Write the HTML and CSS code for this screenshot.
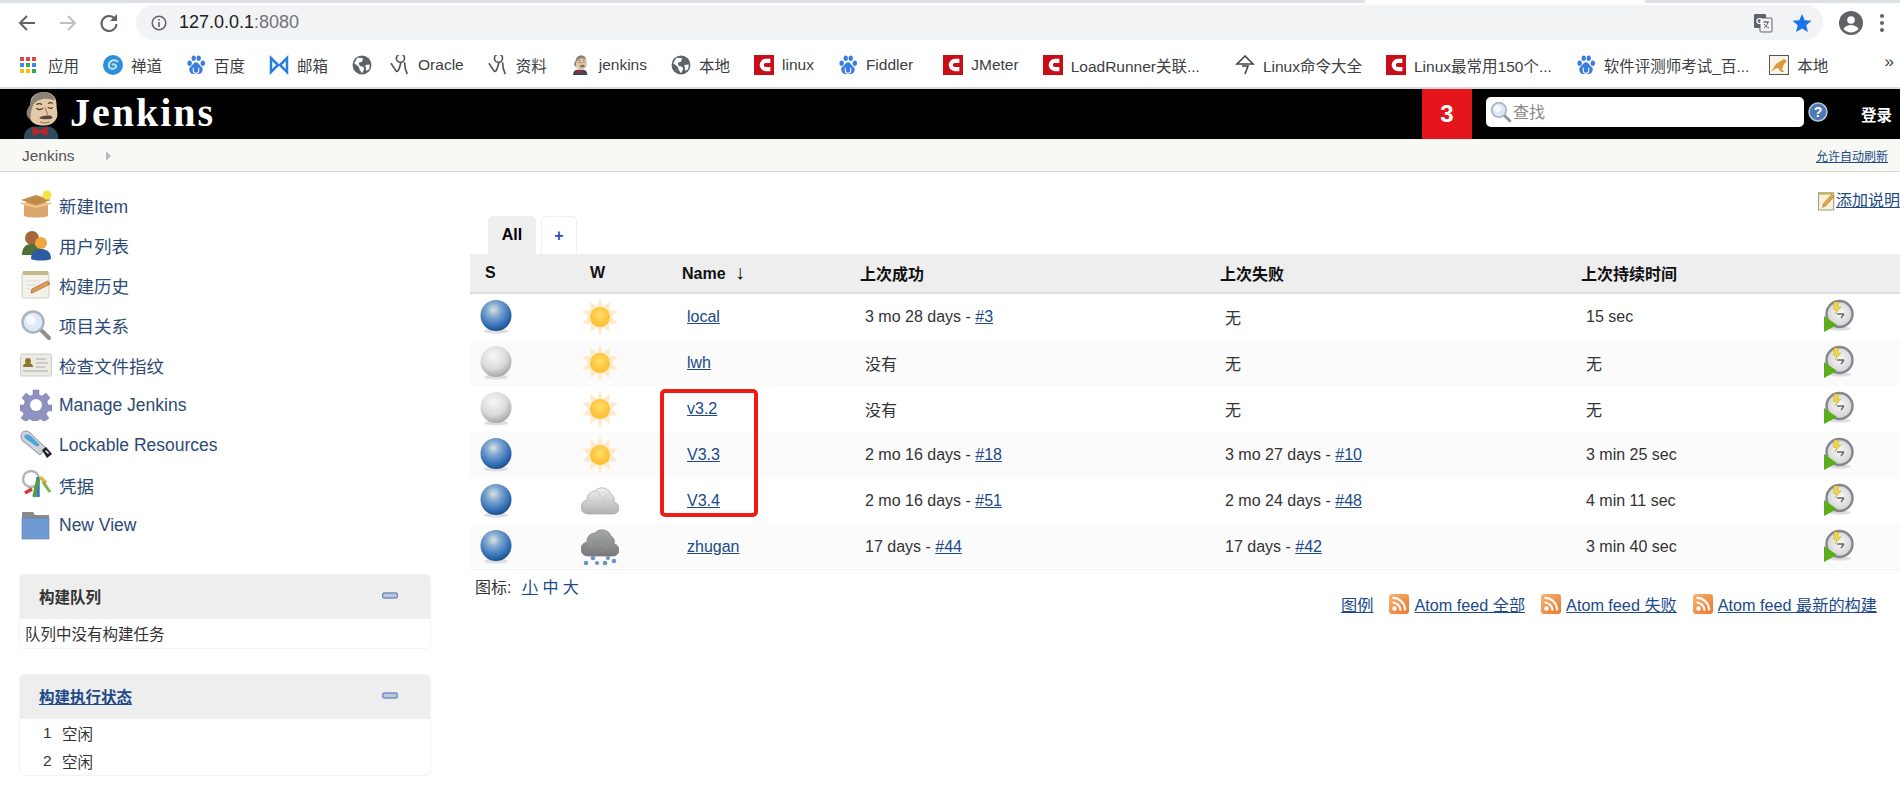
FILE: index.html
```html
<!DOCTYPE html>
<html>
<head>
  <title>Jenkins</title>
  <link rel="stylesheet" href="styles.css">
</head>
<body>
  <svg class="sprite" aria-hidden="true">
    <defs>
      <radialGradient id="blue-ball" cx="42%" cy="32%" r="68%">
        <stop offset="0" stop-color="#d9e4df"/>
        <stop offset="0.35" stop-color="#7fa6d0"/>
        <stop offset="0.8" stop-color="#2f6db5"/>
        <stop offset="1" stop-color="#234f8c"/>
      </radialGradient>
      <radialGradient id="grey-ball" cx="42%" cy="32%" r="68%">
        <stop offset="0" stop-color="#f7f7f7"/>
        <stop offset="0.6" stop-color="#dcdcdc"/>
        <stop offset="1" stop-color="#a9a9a9"/>
      </radialGradient>
      <radialGradient id="sun-core" cx="50%" cy="40%" r="60%">
        <stop offset="0" stop-color="#ffe06a"/>
        <stop offset="1" stop-color="#fcb92c"/>
      </radialGradient>
      <linearGradient id="cloud-light" x1="0" y1="0" x2="0" y2="1">
        <stop offset="0" stop-color="#f0f0f0"/>
        <stop offset="1" stop-color="#b0b0b0"/>
      </linearGradient>
      <linearGradient id="cloud-dark" x1="0" y1="0" x2="0" y2="1">
        <stop offset="0" stop-color="#a8a8a8"/>
        <stop offset="1" stop-color="#77797a"/>
      </linearGradient>
      <radialGradient id="clock-face" cx="50%" cy="45%" r="55%">
        <stop offset="0" stop-color="#fafafa"/>
        <stop offset="1" stop-color="#d0d0d0"/>
      </radialGradient>
      <linearGradient id="rss-bg" x1="0" y1="0" x2="1" y2="1">
        <stop offset="0" stop-color="#f9b475"/>
        <stop offset="1" stop-color="#e9772b"/>
      </linearGradient>

      <symbol id="ball-blue" viewBox="0 0 32 34">
        <ellipse cx="16" cy="31" rx="12" ry="2.5" fill="#ddd"/>
        <circle cx="16" cy="15.5" r="15.5" fill="url(#blue-ball)"/>
      </symbol>
      <symbol id="ball-grey" viewBox="0 0 32 34">
        <ellipse cx="16" cy="31" rx="12" ry="2.5" fill="#ddd"/>
        <circle cx="16" cy="15.5" r="15.5" fill="url(#grey-ball)"/>
      </symbol>
      <symbol id="sun" viewBox="0 0 36 38">
        <polygon fill="#fdeac6" points="18,0 21,9 28,4 27,12 36,13 29,19 36,25 27,26 28,34 21,29 18,38 15,29 8,34 9,26 0,25 7,19 0,13 9,12 8,4 15,9"/>
        <circle cx="18" cy="19" r="10" fill="url(#sun-core)"/>
      </symbol>
      <symbol id="cloud" viewBox="0 0 38 38">
        <path fill="url(#cloud-light)" stroke="#a8a8a8" stroke-width="0.7" d="M8 32a7 7 0 0 1-2-14 8 8 0 0 1 8-9 9.500 9.500 0 0 1 16 3 7 7 0 0 1 3 8 6 6 0 0 1-2 12z"/>
        <path fill="none" stroke="#cdcdcd" stroke-width="1.200" d="M14 9c3 0 5 2 5 6M30 12c-4 0-7 2-7 6M6 18c3 0 5 2 5 5M17 22c4-2 8-1 9 3"/>
      </symbol>
      <symbol id="storm" viewBox="0 0 38 38">
        <path fill="url(#cloud-dark)" stroke="#777" stroke-width="0.7" d="M8 28a7 7 0 0 1-2-14 8 8 0 0 1 8-9 9.500 9.500 0 0 1 16 3 7 7 0 0 1 3 8 6 6 0 0 1-2 12z"/>
        <path fill="none" stroke="#9a9a9a" stroke-width="1.200" d="M14 5c3 0 5 2 5 6M30 8c-4 0-7 2-7 6M6 14c3 0 5 2 5 5M17 18c4-2 8-1 9 3"/>
        <g fill="#6f92c6">
          <circle cx="5" cy="35" r="2.300"/><circle cx="12" cy="30" r="2.300"/><circle cx="16" cy="35" r="2"/>
          <circle cx="24" cy="35" r="2.300"/><circle cx="27" cy="30" r="2.100"/><circle cx="33" cy="33" r="2.300"/>
        </g>
      </symbol>
      <symbol id="build-now" viewBox="0 0 32 36">
        <ellipse cx="18" cy="29.500" rx="11" ry="2" fill="#ddd"/>
        <circle cx="17.500" cy="15" r="13" fill="url(#clock-face)" stroke="#85858f" stroke-width="2.400"/>
        <polygon fill="#f1d54a" stroke="#b59a1d" stroke-width="0.400" points="12,3 17,3 15.500,8 19,8 13,15 14.500,10.500 11.500,10.500"/>
        <path fill="none" stroke="#666" stroke-width="1.300" d="M15 15l7 0M22 15l-3 4"/>
        <polygon fill="#5cad1d" points="2,17 15,26 2,33"/>
      </symbol>
      <symbol id="rss" viewBox="0 0 20 20">
        <rect width="20" height="20" rx="3" fill="url(#rss-bg)"/>
        <circle cx="5.5" cy="14.5" r="2.2" fill="#fff"/>
        <path fill="none" stroke="#fff" stroke-width="2.2" d="M3.5 8.5a8 8 0 0 1 8 8M3.5 3.8a12.7 12.7 0 0 1 12.7 12.7"/>
      </symbol>
      <symbol id="minus" viewBox="0 0 16 8">
        <rect x="0.7" y="1" width="14.6" height="5" rx="1.5" fill="#bcc8d8" stroke="#6f8fc2" stroke-width="1.4"/>
      </symbol>
      <symbol id="globe" viewBox="0 0 18 18">
        <circle cx="9" cy="9" r="8.5" fill="#5f6368"/>
        <path fill="#fff" d="M5 2.5l5 .5-1 3-3 1 1 3 3 .5 1 2-2 4-2-3-1-3-4-3zM12 9l4-.5-.5 4-2.5 2z"/>
      </symbol>
      <symbol id="csdn" viewBox="0 0 22 22">
        <rect width="22" height="22" fill="#c80e16"/>
        <path fill="none" stroke="#fff" stroke-width="4.500" d="M18 6.500h-5a4.500 4.500 0 0 0 0 9h5"/>
      </symbol>
      <symbol id="baidu" viewBox="0 0 20 22">
        <g fill="#3a7de0">
          <ellipse cx="3" cy="9" rx="2.4" ry="3"/><ellipse cx="7.500" cy="3.500" rx="2.300" ry="3"/>
          <ellipse cx="13" cy="3.500" rx="2.300" ry="3"/><ellipse cx="17.500" cy="9" rx="2.400" ry="3"/>
          <path d="M10 8c3 0 4 4 6 5 3 2 1 8-3 8-1 0-2-.5-3-.5s-2 .5-3 .5c-4 0-6-6-3-8 2-1 3-5 6-5z"/>
        </g>
        <path fill="none" stroke="#fff" stroke-width="1.200" d="M7 14v3a1.500 1.500 0 0 0 6 0v-3"/>
      </symbol>
      <symbol id="oracle" viewBox="0 0 22 22">
        <path fill="none" stroke="#555" stroke-width="1.800" d="M1 9l6 9c2 1 4-5 5-10M12 8a4.500 4.500 0 1 1 4-5c0 3-2 5-4 5zM16 8c0 5 1 9 3 13"/>
      </symbol>
      <symbol id="butler" viewBox="0 0 42 50">
        <path fill="#2f4a5f" d="M1 50c0-8 4-12 11-13l16 0c6 2 9 7 9 13z"/>
        <path fill="#e4c9a8" d="M8 12c0-7 7-11 14-11s13 4 13 12c0 5 1 8 1 11 0 7-6 12-14 12S8 33 7 27c-1-5 1-10 1-15z"/>
        <path fill="#b5262a" d="M10 37l8 3.500 8-3.500v10l-8-3.500-8 3.500z"/>
        <path fill="#8a8276" d="M8 13c-2 5-6 8-3 14l3 3c0-7 1-12 3-16 4-5 12-8 22-4 1-5-6-9-12-9S9 6 8 13z"/>
        <path fill="none" stroke="#4a3a2e" stroke-width="1.300" d="M14 18c2 1.500 5 1.500 7 0M26 17c2 1.200 4 1.200 5 0M14 14c2-1 4-1 6 0M26 13c2-1 4-1 5 0"/>
        <path fill="#57463a" d="M17 28c3-2 8-3 13-2l1 2c-4 2-10 2-14 0z"/>
        <path fill="none" stroke="#a57c5e" stroke-width="1.200" d="M23 17c1 3 2 5 3 8M18 32c3 1.500 7 1.500 10 0"/>
      </symbol>
      <symbol id="icon-new" viewBox="0 0 32 32">
        <path fill="#dba66b" d="M4 14l12-4 12 4v13c-4 2-20 2-24 0z"/>
        <path fill="#c28a4a" d="M1 11l15-5 15 5-15 5z"/>
        <path fill="#edc795" d="M1 13l15 4 15-4v2l-15 4-15-4z"/>
        <circle cx="27" cy="6" r="4.500" fill="#f4e642"/>
      </symbol>
      <symbol id="icon-people" viewBox="0 0 32 32">
        <circle cx="12" cy="9" r="7" fill="#a5683a"/>
        <path fill="#4d7034" d="M2 26c0-8 4-11 10-11s10 3 10 11z"/>
        <circle cx="21" cy="14" r="6" fill="#f0a73e"/>
        <path fill="#2c5ba2" d="M11 30c0-7 4-10 10-10s10 3 10 10c-5 2-15 2-20 0z"/>
      </symbol>
      <symbol id="icon-history" viewBox="0 0 32 32">
        <rect x="2" y="3" width="27" height="26" rx="2" fill="#f2f1ea" stroke="#cfcfc6"/>
        <rect x="3" y="2" width="25" height="4" fill="#c5b88c"/>
        <path stroke="#ddd" d="M6 12h14M6 16h10M6 20h12"/>
        <path fill="#e0a14f" stroke="#b04f2a" stroke-width="0.700" d="M11 24l1-4 16-8 2 3-16 8z"/>
      </symbol>
      <symbol id="icon-search" viewBox="0 0 32 32">
        <path stroke="#8f8f8f" stroke-width="4" stroke-linecap="round" d="M20 20l9 9"/>
        <circle cx="13" cy="13" r="10.500" fill="#dfe9f6" stroke="#a9b4c4" stroke-width="2.500"/>
        <circle cx="11" cy="11" r="5" fill="#f6f9fd"/>
      </symbol>
      <symbol id="icon-finger" viewBox="0 0 32 24">
        <rect x="0.500" y="1" width="31" height="22" rx="2" fill="#ecebe3" stroke="#ccc"/>
        <circle cx="8" cy="8" r="3" fill="#8a7a2e"/>
        <path fill="#8a7a2e" d="M3 14c0-3 2-4 5-4s5 1 5 4z"/>
        <path stroke="#aaa" d="M16 6h10M16 10h12M16 14h9M3 18h25"/>
      </symbol>
      <symbol id="icon-gear" viewBox="0 0 32 32">
        <path fill="#8f92c0" stroke="#7a7da8" stroke-width="0.500" d="M13 1h6v5l3 1 4-3 4 5-3 3 1 4h4v6h-4l-2 3 3 4-5 4-3-3-3 1v4h-6v-4l-3-1-3 3-5-4 3-4-2-3H0v-6h4l1-4-3-3 4-5 4 3 3-1z"/>
        <circle cx="16" cy="16" r="6" fill="#fff"/>
      </symbol>
      <symbol id="icon-usb" viewBox="0 0 32 32">
        <path fill="#cfd3d8" stroke="#8c9096" d="M1 6c1-4 5-5 8-3l17 16-6 7L3 12c-2-2-2-4-2-6z"/>
        <path fill="#4ea5dd" d="M5 6c2-1 4 0 6 1l8 8c1 2-1 3-3 2L6 10c-2-1-2-3-1-4z"/>
        <path fill="#222" d="M22 21l4-3 6 7-5 4z"/>
        <path fill="#eee" d="M26 21l3 3-1 1-3-3z"/>
      </symbol>
      <symbol id="icon-keys" viewBox="0 0 32 32">
        <circle cx="11" cy="10" r="8" fill="#fff" stroke="#b6b6b6" stroke-width="2.500"/>
        <path stroke="#d33a30" stroke-width="3.500" d="M12 20l-7 4"/>
        <path stroke="#3a77c9" stroke-width="3.500" d="M18 8l0 20"/>
        <path stroke="#4da33a" stroke-width="3.500" d="M14 28l4-18"/>
        <path stroke="#e0b13a" stroke-width="3.500" d="M20 8l6 6"/>
        <path stroke="#7fae4a" stroke-width="3" d="M23 13l7 10"/>
      </symbol>
      <symbol id="icon-folder" viewBox="0 0 32 32">
        <path fill="#8a8a8a" d="M2 3h11l2 3h14v6H2z"/>
        <path fill="#6f9ad2" stroke="#5a7ea8" stroke-width="0.600" d="M2 9h27v21H2z"/>
      </symbol>
      <symbol id="icon-note" viewBox="0 0 20 22">
        <rect x="0.500" y="2" width="17" height="19" fill="#f5f0da" stroke="#9c9170"/>
        <rect x="0.500" y="1" width="17" height="3" fill="#c9b46b"/>
        <path fill="#e8a53c" stroke="#8a5b1c" stroke-width="0.500" d="M5 18l1-4 9-10 3 2-9 10z"/>
      </symbol>
    </defs>
  </svg>

  <div class="tabstrip">
    <div class="tabstrip-left"></div>
    <div class="tabstrip-active"></div>
    <div class="tabstrip-right"></div>
  </div>

  <div class="toolbar">
    <svg class="nav-icon" viewBox="0 0 20 20"><path fill="none" stroke="#5f6368" stroke-width="2" d="M18 10H3M10 3l-7 7 7 7"/></svg>
    <svg class="nav-icon nav-gap" viewBox="0 0 20 20"><path fill="none" stroke="#bdc1c6" stroke-width="2" d="M2 10h15M10 3l7 7-7 7"/></svg>
    <svg class="nav-icon nav-gap" viewBox="0 0 20 20"><path fill="none" stroke="#5f6368" stroke-width="2" d="M16 6a7.500 7.500 0 1 0 1.500 5"/><path fill="#5f6368" d="M18 1v7h-7z"/></svg>
    <div class="omnibox">
      <svg class="info-icon" viewBox="0 0 16 16"><circle cx="8" cy="8" r="6.800" fill="none" stroke="#5f6368" stroke-width="1.500"/><path fill="#5f6368" d="M7.200 7h1.600v5H7.200zM7.200 4h1.600v1.600H7.200z"/></svg>
      <span class="url">127.0.0.1<span class="url-port">:8080</span></span>
      <svg class="translate-icon" viewBox="0 0 20 20"><rect x="1" y="1" width="12" height="14" rx="1" fill="#5f6368"/><rect x="7" y="5" width="12" height="14" rx="1" fill="#f1f3f4" stroke="#5f6368"/><text x="3" y="11" class="translate-g">G</text><path fill="none" stroke="#5f6368" d="M10 9h6M13 8v2M15 9c-1 3-2 5-4 6M11 11c1 2 3 3 5 4"/></svg>
      <svg class="star-icon" viewBox="0 0 20 20"><polygon fill="#1a73e8" points="10,1 12.700,7.200 19.500,7.800 14.300,12.300 15.900,19 10,15.500 4.100,19 5.700,12.300 0.500,7.800 7.300,7.200"/></svg>
    </div>
    <svg class="account-icon" viewBox="0 0 24 24"><circle cx="12" cy="12" r="12" fill="#5f6368"/><circle cx="12" cy="9" r="3.800" fill="#fff"/><path fill="#fff" d="M4.500 18c1.500-3 5-4 7.500-4s6 1 7.500 4c-4 4.500-11 4.500-15 0z"/></svg>
    <div class="dots"><i></i><i></i><i></i></div>
  </div>

  <div class="bookmarks">
    <a class="bm"><svg class="bm-icon" viewBox="0 -2 20 20"><g fill="#e8453c"><rect width="4" height="4"/><rect x="6" width="4" height="4"/><rect x="12" width="4" height="4"/></g><g fill="#4285f4"><rect y="6" width="4" height="4"/><rect x="6" y="6" width="4" height="4" fill="#34a853"/><rect x="12" y="6" width="4" height="4"/></g><g fill="#fbbc05"><rect y="12" width="4" height="4"/><rect x="6" y="12" width="4" height="4"/><rect x="12" y="12" width="4" height="4" fill="#34a853"/></g></svg>应用</a>
    <a class="bm"><svg class="bm-icon" viewBox="0 0 20 20"><circle cx="10" cy="10" r="10" fill="#2f8fd8"/><path fill="none" stroke="#bfe3f7" stroke-width="2" d="M15 7c-3-3-8-2-9 2s3 6 6 4-1-5-3-3"/></svg>禅道</a>
    <a class="bm"><svg class="bm-icon"><use href="#baidu"/></svg>百度</a>
    <a class="bm"><svg class="bm-icon" viewBox="0 0 20 20"><path fill="none" stroke="#2a7de1" stroke-width="2.500" d="M2 3v14l7-7zM18 3v14l-7-7z"/></svg>邮箱</a>
    <a class="bm bm-globe"><svg class="bm-icon"><use href="#globe"/></svg></a>
    <a class="bm"><svg class="bm-icon"><use href="#oracle"/></svg>Oracle</a>
    <a class="bm"><svg class="bm-icon"><use href="#oracle"/></svg>资料</a>
    <a class="bm"><svg class="bm-icon"><use href="#butler"/></svg>jenkins</a>
    <a class="bm"><svg class="bm-icon"><use href="#globe"/></svg>本地</a>
    <a class="bm"><svg class="bm-icon"><use href="#csdn"/></svg>linux</a>
    <a class="bm"><svg class="bm-icon"><use href="#baidu"/></svg>Fiddler</a>
    <a class="bm bm-push-s"><svg class="bm-icon"><use href="#csdn"/></svg>JMeter</a>
    <a class="bm"><svg class="bm-icon"><use href="#csdn"/></svg>LoadRunner关联...</a>
    <a class="bm bm-push-m"><svg class="bm-icon" viewBox="0 0 20 20"><path fill="none" stroke="#444" stroke-width="1.600" d="M10 1L2 9h16zM7 11h6l-3 8"/></svg>Linux命令大全</a>
    <a class="bm"><svg class="bm-icon"><use href="#csdn"/></svg>Linux最常用150个...</a>
    <a class="bm"><svg class="bm-icon"><use href="#baidu"/></svg>软件评测师考试_百...</a>
    <a class="bm bm-pull"><svg class="bm-icon" viewBox="0 0 20 20"><rect x="0.500" y="0.500" width="19" height="19" fill="#f8f4e8" stroke="#555"/><path fill="#d89a3a" d="M2 17l5-8 8-5 3 2-3 3-2 5 2 3h-3l-3-4-3 1z"/></svg>本地</a>
    <span class="bm-more">»</span>
  </div>

  <div class="header">
    <svg class="logo"><use href="#butler"/></svg>
    <span class="logo-text">Jenkins</span>
    <div class="header-right">
      <div class="alert-count">3</div>
      <div class="search-box">
        <svg class="search-icon"><use href="#icon-search"/></svg>
        <span class="search-hint">查找</span>
      </div>
      <svg class="help-icon" viewBox="0 0 20 20"><circle cx="10" cy="10" r="9" fill="#4e79b5" stroke="#b3c4dc" stroke-width="1.500"/><text x="10" y="15" class="help-mark">?</text></svg>
      <span class="login">登录</span>
    </div>
  </div>

  <div class="breadcrumb">
    <span class="crumb">Jenkins</span>
    <span class="crumb-arrow"></span>
    <a class="auto-refresh">允许自动刷新</a>
  </div>

  <div class="main">
    <div class="sidebar">
      <div class="tasks">
        <a class="task"><svg class="task-icon"><use href="#icon-new"/></svg>新建Item</a>
        <a class="task"><svg class="task-icon"><use href="#icon-people"/></svg>用户列表</a>
        <a class="task"><svg class="task-icon"><use href="#icon-history"/></svg>构建历史</a>
        <a class="task"><svg class="task-icon"><use href="#icon-search"/></svg>项目关系</a>
        <a class="task"><svg class="task-icon"><use href="#icon-finger"/></svg>检查文件指纹</a>
        <a class="task"><svg class="task-icon"><use href="#icon-gear"/></svg>Manage Jenkins</a>
        <a class="task"><svg class="task-icon"><use href="#icon-usb"/></svg>Lockable Resources</a>
        <a class="task"><svg class="task-icon"><use href="#icon-keys"/></svg>凭据</a>
        <a class="task"><svg class="task-icon"><use href="#icon-folder"/></svg>New View</a>
      </div>

      <div class="pane">
        <div class="pane-header">
          <span>构建队列</span>
          <svg class="pane-minus"><use href="#minus"/></svg>
        </div>
        <div class="pane-text">队列中没有构建任务</div>
      </div>

      <div class="pane">
        <div class="pane-header">
          <a class="pane-link">构建执行状态</a>
          <svg class="pane-minus"><use href="#minus"/></svg>
        </div>
        <div class="executors">
          <div class="executor"><span class="executor-num">1</span>空闲</div>
          <div class="executor"><span class="executor-num">2</span>空闲</div>
        </div>
      </div>
    </div>

    <div class="content">
      <div class="description">
        <svg class="note-icon"><use href="#icon-note"/></svg><a class="link">添加说明</a>
      </div>

      <div class="tabs">
        <div class="tab tab-active">All</div>
        <div class="tab tab-add">+</div>
      </div>

      <div class="projects">
        <table class="job-table">
          <colgroup>
            <col class="col-s"><col class="col-w"><col class="col-name"><col class="col-success"><col class="col-fail"><col class="col-dur"><col>
          </colgroup>
          <thead>
            <tr>
              <th class="th-wide">S</th>
              <th class="th-wide">W</th>
              <th>Name <span class="sort-arrow">↓</span></th>
              <th>上次成功</th>
              <th>上次失败</th>
              <th>上次持续时间</th>
              <th></th>
            </tr>
          </thead>
          <tbody>
            <tr>
              <td class="td-s"><svg class="ball"><use href="#ball-blue"/></svg></td>
              <td class="td-w"><svg class="weather"><use href="#sun"/></svg></td>
              <td><a class="link">local</a></td>
              <td>3 mo 28 days - <a class="link">#3</a></td>
              <td>无</td>
              <td>15 sec</td>
              <td class="td-build"><svg class="build"><use href="#build-now"/></svg></td>
            </tr>
            <tr>
              <td class="td-s"><svg class="ball"><use href="#ball-grey"/></svg></td>
              <td class="td-w"><svg class="weather"><use href="#sun"/></svg></td>
              <td><a class="link">lwh</a></td>
              <td>没有</td>
              <td>无</td>
              <td>无</td>
              <td class="td-build"><svg class="build"><use href="#build-now"/></svg></td>
            </tr>
            <tr>
              <td class="td-s"><svg class="ball"><use href="#ball-grey"/></svg></td>
              <td class="td-w"><svg class="weather"><use href="#sun"/></svg></td>
              <td><a class="link">v3.2</a></td>
              <td>没有</td>
              <td>无</td>
              <td>无</td>
              <td class="td-build"><svg class="build"><use href="#build-now"/></svg></td>
            </tr>
            <tr>
              <td class="td-s"><svg class="ball"><use href="#ball-blue"/></svg></td>
              <td class="td-w"><svg class="weather"><use href="#sun"/></svg></td>
              <td><a class="link">V3.3</a></td>
              <td>2 mo 16 days - <a class="link">#18</a></td>
              <td>3 mo 27 days - <a class="link">#10</a></td>
              <td>3 min 25 sec</td>
              <td class="td-build"><svg class="build"><use href="#build-now"/></svg></td>
            </tr>
            <tr>
              <td class="td-s"><svg class="ball"><use href="#ball-blue"/></svg></td>
              <td class="td-w"><svg class="weather"><use href="#cloud"/></svg></td>
              <td><a class="link">V3.4</a></td>
              <td>2 mo 16 days - <a class="link">#51</a></td>
              <td>2 mo 24 days - <a class="link">#48</a></td>
              <td>4 min 11 sec</td>
              <td class="td-build"><svg class="build"><use href="#build-now"/></svg></td>
            </tr>
            <tr>
              <td class="td-s"><svg class="ball"><use href="#ball-blue"/></svg></td>
              <td class="td-w"><svg class="weather"><use href="#storm"/></svg></td>
              <td><a class="link">zhugan</a></td>
              <td>17 days - <a class="link">#44</a></td>
              <td>17 days - <a class="link">#42</a></td>
              <td>3 min 40 sec</td>
              <td class="td-build"><svg class="build"><use href="#build-now"/></svg></td>
            </tr>
          </tbody>
        </table>
        <div class="red-box"></div>
      </div>

      <div class="table-footer">
        <div class="icon-sizes">图标: <a class="link size-first">小</a> <a class="size-link">中</a> <a class="size-link">大</a></div>
        <div class="feeds">
          <a class="link">图例</a>
          <span class="feed"><svg class="rss-icon"><use href="#rss"/></svg><a class="link">Atom feed 全部</a></span>
          <span class="feed"><svg class="rss-icon"><use href="#rss"/></svg><a class="link">Atom feed 失败</a></span>
          <span class="feed"><svg class="rss-icon"><use href="#rss"/></svg><a class="link">Atom feed 最新的构建</a></span>
        </div>
      </div>
    </div>
  </div>
</body>
</html>
```

FILE: styles.css
```css
body {
  margin: 0;
  height: 801px;
  overflow: hidden;
  background-color: #fff;
  color: #333;
  font-family: "Liberation Sans", "Noto Sans CJK SC", sans-serif;
  font-size: 16px;
}

.sprite {
  display: block;
  width: 0;
  height: 0;
}

.link {
  color: #204a87;
  text-decoration: underline;
}

/* browser chrome */
.tabstrip {
  display: flex;
  height: 3px;
}

.tabstrip-left {
  width: 1365px;
  background-color: #dee1e6;
}

.tabstrip-active {
  width: 280px;
  background-color: #fff;
}

.tabstrip-right {
  flex: 1;
  background-color: #dee1e6;
}

.toolbar {
  display: flex;
  align-items: center;
  height: 39px;
  padding-left: 17px;
  background-color: #fff;
}

.nav-icon {
  width: 20px;
  height: 20px;
}

.nav-gap {
  margin-left: 21px;
}

.omnibox {
  display: flex;
  align-items: center;
  width: 1687px;
  height: 35px;
  margin-left: 17px;
  padding-left: 15px;
  box-sizing: border-box;
  border-radius: 18px;
  background-color: #f1f3f4;
}

.info-icon {
  width: 16px;
  height: 16px;
}

.url {
  margin-left: 12px;
  font-size: 18px;
  color: #202124;
}

.url-port {
  color: #70757a;
}

.translate-icon {
  width: 20px;
  height: 20px;
  margin-left: auto;
}

.translate-g {
  font-size: 9px;
  font-weight: bold;
  fill: #fff;
}

.star-icon {
  width: 20px;
  height: 20px;
  margin-left: 19px;
  margin-right: 11px;
}

.account-icon {
  width: 24px;
  height: 24px;
  margin-left: 16px;
}

.dots {
  display: flex;
  flex-direction: column;
  gap: 3px;
  margin-left: 17px;
}

.dots i {
  width: 4px;
  height: 4px;
  border-radius: 50%;
  background-color: #5f6368;
}

.bookmarks {
  display: flex;
  align-items: center;
  position: relative;
  height: 45px;
  padding-left: 20px;
  gap: 24px;
  background-color: #fff;
  border-bottom: 2px solid #dadce0;
  font-size: 15.5px;
  color: #3c4043;
  white-space: nowrap;
}

.bm {
  display: flex;
  align-items: center;
}

.bm-icon {
  width: 20px;
  height: 20px;
  margin-right: 8px;
}

.bm-globe .bm-icon {
  margin-right: -6px;
}

.bm-push-s {
  margin-left: 6px;
}

.bm-push-m {
  margin-left: 11px;
}

.bm-pull {
  margin-left: -4px;
}

.bm-more {
  position: absolute;
  top: 10px;
  right: 6px;
  font-size: 17px;
}

/* jenkins header */
.header {
  display: flex;
  align-items: center;
  height: 50px;
  background-color: #000;
}

.logo {
  width: 42px;
  height: 48px;
  margin-left: 22px;
  align-self: flex-end;
}

.logo-text {
  margin-left: 6px;
  margin-bottom: 4px;
  font-family: "Liberation Serif", serif;
  font-size: 40px;
  font-weight: bold;
  letter-spacing: 2px;
  color: #fff;
}

.header-right {
  display: flex;
  align-items: center;
  height: 100%;
  margin-left: auto;
}

.alert-count {
  display: flex;
  align-items: center;
  justify-content: center;
  width: 50px;
  height: 100%;
  background-color: #e5161b;
  color: #fff;
  font-size: 24px;
  font-weight: bold;
}

.search-box {
  display: flex;
  align-items: center;
  width: 318px;
  height: 30px;
  margin-left: 14px;
  margin-bottom: 5px;
  padding-left: 4px;
  box-sizing: border-box;
  border-radius: 5px;
  background-color: #fff;
}

.search-icon {
  width: 22px;
  height: 22px;
}

.search-hint {
  margin-left: 1px;
  margin-bottom: 2px;
  font-size: 16px;
  color: #888;
}

.help-icon {
  width: 20px;
  height: 20px;
  margin-left: 4px;
  margin-bottom: 5px;
}

.help-mark {
  font-size: 14px;
  font-weight: bold;
  fill: #fff;
  text-anchor: middle;
}

.login {
  width: 39px;
  margin-left: 33px;
  font-size: 15.5px;
  font-weight: bold;
  color: #fff;
}

.breadcrumb {
  display: flex;
  align-items: center;
  height: 31px;
  padding-left: 22px;
  padding-right: 12px;
  background-color: #f8f8f5;
  border-top: 1px solid #f1f1ec;
  border-bottom: 1px solid #d8d8d2;
}

.crumb {
  font-size: 15.5px;
  color: #555;
}

.crumb-arrow {
  width: 0;
  height: 0;
  margin-left: 31px;
  border-left: 5px solid #bbb;
  border-top: 5px solid transparent;
  border-bottom: 5px solid transparent;
}

.auto-refresh {
  margin-left: auto;
  font-size: 12px;
  color: #204a87;
  text-decoration: underline;
}

/* main area */
.main {
  display: flex;
}

.sidebar {
  flex: none;
  width: 412px;
  padding: 13px 39px 0 19px;
}

.tasks {
  display: flex;
  flex-direction: column;
  padding-left: 1px;
}

.task {
  display: flex;
  align-items: center;
  height: 40px;
  font-size: 17.5px;
  color: #2d4a75;
}

.task-icon {
  width: 32px;
  height: 32px;
  margin-right: 7px;
}

.pane {
  margin-bottom: 25px;
  border: 1px solid #f3f3f3;
  border-radius: 5px;
  overflow: hidden;
  background-color: #fff;
}

.tasks + .pane {
  margin-top: 29px;
}

.pane-header {
  display: flex;
  align-items: center;
  justify-content: space-between;
  height: 42px;
  padding: 0 32px 2px 19px;
  background-color: #eee;
  font-size: 15.5px;
  font-weight: bold;
}

.pane-link {
  color: #204a87;
  text-decoration: underline;
}

.pane-minus {
  width: 16px;
  height: 8px;
}

.pane-text {
  padding: 3px 4px 4px 5px;
  font-size: 15.5px;
}

.executor {
  display: flex;
  align-items: center;
  height: 28px;
  font-size: 15.5px;
}

.executor-num {
  width: 19px;
  margin-left: 23px;
}

.content {
  flex: 1;
  min-width: 0;
  overflow: hidden;
}

.description {
  display: flex;
  justify-content: flex-end;
  align-items: flex-end;
  height: 39px;
  padding-bottom: 5px;
  font-size: 16px;
  white-space: nowrap;
}

.note-icon {
  width: 18px;
  height: 20px;
}

.tabs {
  display: flex;
  gap: 5px;
  height: 38px;
  padding-left: 18px;
}

.tab {
  display: flex;
  align-items: center;
  justify-content: center;
  border-radius: 5px 5px 0 0;
  box-sizing: border-box;
  font-weight: bold;
}

.tab-active {
  width: 48px;
  background-color: #eee;
  color: #000;
}

.tab-add {
  width: 36px;
  border: 1px solid #eee;
  border-bottom: none;
  color: #2c4fb0;
}

.projects {
  position: relative;
}

.job-table {
  width: 100%;
  table-layout: fixed;
  border-collapse: collapse;
}

.col-s {
  width: 105px;
}

.col-w {
  width: 102px;
}

.col-name {
  width: 178px;
}

.col-success {
  width: 360px;
}

.col-fail {
  width: 361px;
}

.col-dur {
  width: 240px;
}

.job-table th {
  height: 38px;
  padding: 0 0 0 5px;
  text-align: left;
  background-color: #eee;
  border-bottom: 2px solid #ddd;
  color: #111;
  font-size: 16px;
}

.job-table th.th-wide {
  padding-left: 15px;
}

.sort-arrow {
  margin-left: 5px;
  font-size: 20px;
  line-height: 16px;
  font-weight: normal;
}

.job-table td {
  height: 46px;
  padding: 0 0 0 10px;
  font-size: 16px;
}

.job-table tbody tr:nth-child(even) td {
  background-color: #fbfbfb;
}

.job-table tbody tr:last-child td {
  height: 45px;
  border-bottom: 1px solid #f2f2f2;
}

.job-table td svg {
  display: block;
}

.job-table td.td-w {
  padding-left: 6px;
}

.job-table td.td-build {
  padding-left: 6px;
}

.ball {
  width: 32px;
  height: 34px;
}

.weather {
  width: 38px;
  height: 38px;
}

.build {
  width: 32px;
  height: 36px;
}

/* hand drawn marker on the screenshot */
.red-box {
  position: absolute;
  top: 135px;
  left: 190px;
  width: 90px;
  height: 120px;
  border: 4px solid #f01c14;
  border-radius: 5px;
}

.table-footer {
  display: flex;
  justify-content: space-between;
  padding: 4px 23px 0 5px;
}

.icon-sizes {
  font-size: 16px;
}

.size-first {
  margin-left: 6px;
}

.size-link {
  color: #204a87;
}

.feeds {
  display: flex;
  gap: 16px;
  margin-top: 18px;
  font-size: 16.2px;
}

.feed {
  display: flex;
  align-items: center;
}

.rss-icon {
  width: 20px;
  height: 20px;
  margin-right: 5px;
}
```
